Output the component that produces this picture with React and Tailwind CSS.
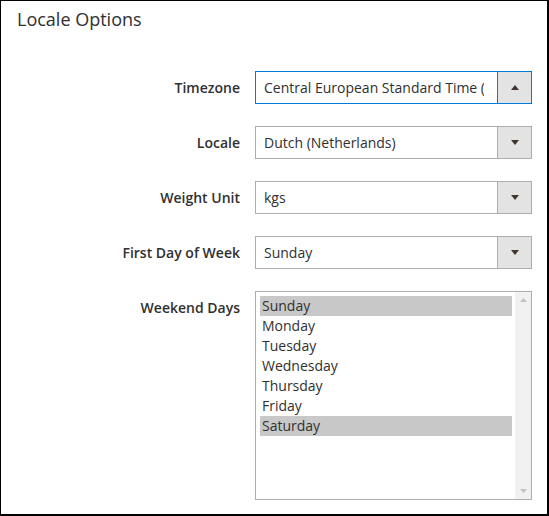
const days = ['Sunday', 'Monday', 'Tuesday', 'Wednesday', 'Thursday', 'Friday', 'Saturday']
const picked = ['Sunday', 'Saturday']

function Arrow({ up }) {
  return (
    <svg width="8" height="5" viewBox="0 0 8 5" className="block">
      {up ? <path d="M0 5 L4 0 L8 5 Z" fill="#41362f" /> : <path d="M0 0 L8 0 L4 5 Z" fill="#41362f" />}
    </svg>
  )
}

function Select({ value, focused, open }) {
  const border = focused ? 'border-[#007bdb]' : 'border-[#adadad]'
  return (
    <div className={`flex h-[33px] w-[277px] border ${border} bg-white`}>
      <div className="min-w-0 flex-1 overflow-hidden whitespace-nowrap pl-[8px] pr-[13px] text-[14px] leading-[31px] text-[#303030]">
        <span className="block overflow-hidden">{value}</span>
      </div>
      <div className={`flex w-[34px] items-center justify-center border-l ${border} bg-[#e3e3e3]`}>
        <Arrow up={open} />
      </div>
    </div>
  )
}

function Row({ label, children }) {
  return (
    <div className="flex items-start">
      <div className="w-[239px] text-right text-[14px] font-semibold leading-[33px] text-[#303030]">{label}</div>
      <div className="ml-[15px]">{children}</div>
    </div>
  )
}

export default function App() {
  return (
    <div className="h-[516px] w-[549px] border-b-2 border-l border-r-2 border-t border-black bg-white" style={{ fontFamily: '"Open Sans", "Liberation Sans", sans-serif' }}>
      <h2 className="pl-[16px] pt-[6px] text-[18px] font-medium leading-[24px] text-[#303030]">Locale Options</h2>
      <div className="mt-[40px] flex flex-col gap-[22px]">
        <Row label="Timezone">
          <Select value="Central European Standard Time (Amsterdam)" focused open />
        </Row>
        <Row label="Locale">
          <Select value="Dutch (Netherlands)" />
        </Row>
        <Row label="Weight Unit">
          <Select value="kgs" />
        </Row>
        <Row label="First Day of Week">
          <Select value="Sunday" />
        </Row>
        <Row label="Weekend Days">
          <div className="flex h-[209px] w-[277px] border border-[#adadad] bg-white">
            <div className="flex-1 pl-[4px] pr-[3px] pt-[4px]">
              {days.map((d) => (
                <div key={d} className={`h-[20px] pl-[2px] text-[14px] leading-[20px] text-[#303030] ${picked.includes(d) ? 'bg-[#c8c8c8]' : ''}`}>{d}</div>
              ))}
            </div>
            <div className="flex w-[16px] flex-col items-center justify-between bg-[#f1f1f1] py-[6px]">
              <svg width="7" height="4" viewBox="0 0 7 4"><path d="M0 4 L3.5 0 L7 4 Z" fill="#c2c2c2" /></svg>
              <svg width="7" height="4" viewBox="0 0 7 4"><path d="M0 0 L7 0 L3.5 4 Z" fill="#c2c2c2" /></svg>
            </div>
          </div>
        </Row>
      </div>
    </div>
  )
}
